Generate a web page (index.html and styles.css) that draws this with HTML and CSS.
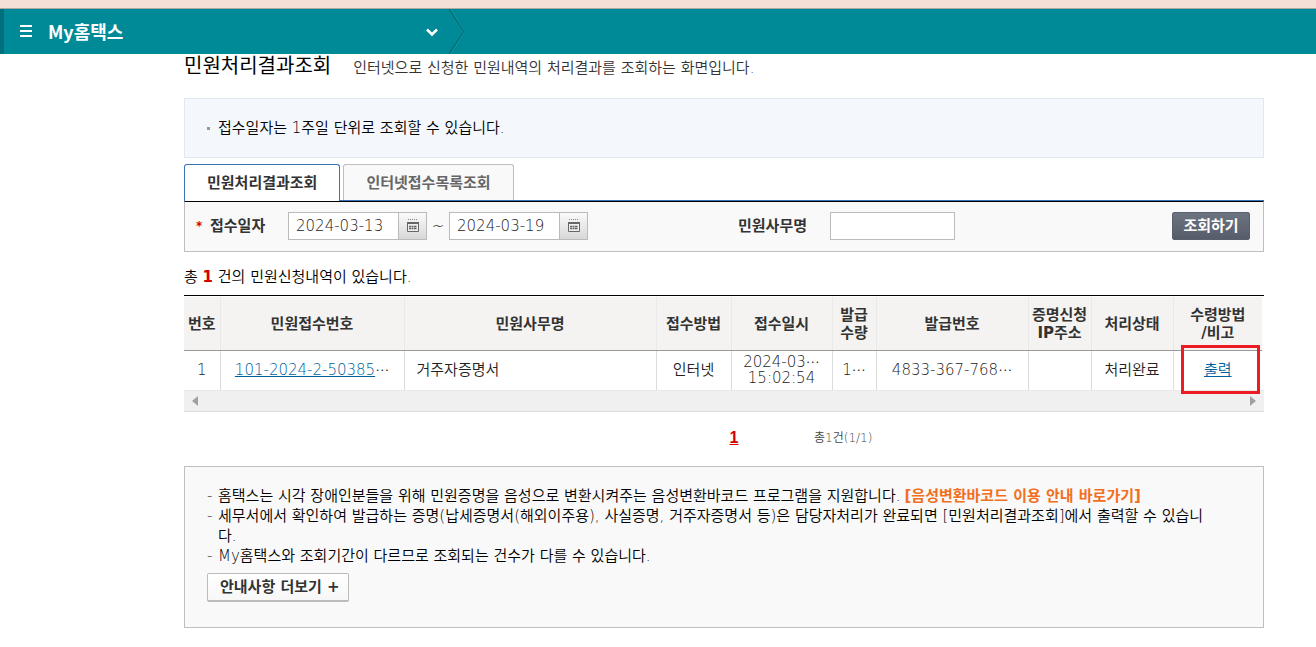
FILE: index.html
```html
<!DOCTYPE html>
<html lang="ko">
<head>
    <meta charset="UTF-8">
    <meta name="viewport" content="width=device-width, initial-scale=1.0">
    <title>민원처리결과조회 - My홈택스</title>
    <link rel="stylesheet" href="styles.css">
</head>
<body>
    <header class="top-bar">
        <button class="menu-button" type="button" aria-label="메뉴">
            <svg width="12" height="12" viewBox="0 0 12 12"><path d="M0 1h12M0 6h12M0 11h12" stroke="#fff" stroke-width="2"/></svg>
        </button>
        <a class="menu-title" href="#">My홈택스</a>
        <button class="menu-toggle" type="button" aria-label="펼치기">
            <svg width="14" height="10" viewBox="0 0 14 10"><path d="M2 2.500l5 5 5-5" fill="none" stroke="#fff" stroke-width="2.600"/></svg>
        </button>
        <svg class="menu-edge" width="16" height="45" viewBox="0 0 16 45"><path d="M0 0l15 22.5L0 45" fill="none" stroke="#00646f" stroke-width="1.2"/><path d="M1.5 0l14 22.5L1.5 45" fill="none" stroke="#2b9da8" stroke-width=".6"/></svg>
    </header>

    <main class="content">
        <div class="page-title">
            <h1>민원처리결과조회</h1>
            <p>인터넷으로 신청한 민원내역의 처리결과를 조회하는 화면입니다.</p>
        </div>

        <ul class="notice">
            <li>접수일자는 1주일 단위로 조회할 수 있습니다.</li>
        </ul>

        <nav class="tabs">
            <button class="tab active" type="button">민원처리결과조회</button>
            <button class="tab" type="button">인터넷접수목록조회</button>
        </nav>

        <form class="search">
            <span class="required">*</span>
            <label class="date-label" for="date-from">접수일자</label>
            <div class="date-field">
                <input type="text" id="date-from" value="2024-03-13">
                <button type="button" aria-label="시작일 선택">
                    <svg width="14" height="14" viewBox="0 0 14 14"><path d="M2 .5h10" stroke="#888" stroke-dasharray="1 1"/><path d="M1.500 3.500h11v9h-11z" fill="#eee" stroke="#666"/><path d="M1 4h12" stroke="#666" stroke-width="2"/><path d="M3 7.500h8M3 9.500h8" stroke="#666" stroke-width="1.500" stroke-dasharray="2 .5"/></svg>
                </button>
            </div>
            <span class="tilde">~</span>
            <div class="date-field">
                <input type="text" id="date-to" value="2024-03-19" aria-label="종료일">
                <button type="button" aria-label="종료일 선택">
                    <svg width="14" height="14" viewBox="0 0 14 14"><path d="M2 .5h10" stroke="#888" stroke-dasharray="1 1"/><path d="M1.500 3.500h11v9h-11z" fill="#eee" stroke="#666"/><path d="M1 4h12" stroke="#666" stroke-width="2"/><path d="M3 7.500h8M3 9.500h8" stroke="#666" stroke-width="1.500" stroke-dasharray="2 .5"/></svg>
                </button>
            </div>
            <label class="name-label" for="work-name">민원사무명</label>
            <input class="name-field" type="text" id="work-name">
            <button class="search-button" type="button">조회하기</button>
        </form>

        <p class="count">총 <strong>1</strong> 건의 민원신청내역이 있습니다.</p>

        <div class="grid">
            <table>
                <colgroup>
                    <col class="col-no">
                    <col class="col-receipt">
                    <col>
                    <col class="col-method">
                    <col class="col-date">
                    <col class="col-qty">
                    <col class="col-issue">
                    <col class="col-ip">
                    <col class="col-status">
                    <col class="col-output">
                </colgroup>
                <thead>
                    <tr>
                        <th>번호</th>
                        <th>민원접수번호</th>
                        <th>민원사무명</th>
                        <th>접수방법</th>
                        <th>접수일시</th>
                        <th>발급<br>수량</th>
                        <th>발급번호</th>
                        <th>증명신청<br>IP주소</th>
                        <th>처리상태</th>
                        <th>수령방법<br>/비고</th>
                    </tr>
                </thead>
                <tbody>
                    <tr>
                        <td>1</td>
                        <td><a href="#">101-2024-2-50385</a><span class="more">⋯</span></td>
                        <td class="left">거주자증명서</td>
                        <td>인터넷</td>
                        <td>2024-03<span class="more">⋯</span><br>15:02:54</td>
                        <td>1<span class="more">⋯</span></td>
                        <td>4833-367-768<span class="more">⋯</span></td>
                        <td></td>
                        <td>처리완료</td>
                        <td class="marked"><a href="#">출력</a></td>
                    </tr>
                </tbody>
            </table>
            <div class="scroll">
                <svg width="6" height="10" viewBox="0 0 6 10"><path d="M6 0v10L0 5z" fill="#a0a0a0"/></svg>
                <svg width="6" height="10" viewBox="0 0 6 10"><path d="M0 0v10l6-5z" fill="#a0a0a0"/></svg>
            </div>
        </div>

        <div class="paging">
            <span></span>
            <a href="#">1</a>
            <span class="total">총1건(1/1)</span>
        </div>

        <section class="guide">
            <ul>
                <li>홈택스는 시각 장애인분들을 위해 민원증명을 음성으로 변환시켜주는 음성변환바코드 프로그램을 지원합니다.<a href="#">[음성변환바코드 이용 안내 바로가기]</a></li>
                <li>세무서에서 확인하여 발급하는 증명(납세증명서(해외이주용), 사실증명, 거주자증명서 등)은 담당자처리가 완료되면 [민원처리결과조회]에서 출력할 수 있습니다.</li>
                <li>My홈택스와 조회기간이 다르므로 조회되는 건수가 다를 수 있습니다.</li>
            </ul>
            <button type="button">안내사항 더보기 +</button>
        </section>
    </main>
</body>
</html>
```
FILE: styles.css
```css
* {
    box-sizing: border-box;
}

body {
    margin: 0;
    background: #fff;
    color: #000;
    font-family: "DejaVu Sans", "Noto Sans CJK KR", sans-serif;
    font-size: 15px;
    font-weight: 350;
    line-height: 20px;
}

h1, p, ul {
    margin: 0;
    padding: 0;
}

ul {
    list-style: none;
}

button, input {
    font: inherit;
    margin: 0;
}

button {
    cursor: pointer;
}

.top-bar {
    display: flex;
    align-items: center;
    height: 54px;
    padding-left: 20px;
    border-top: 8px solid #f5e0d8;
    background: #008a97;
    box-shadow: inset 0 1px #b0a8a4, inset 4px 0 #00707c;
}

.menu-button, .menu-toggle {
    display: flex;
    padding: 0;
    border: 0;
    background: none;
}

.menu-toggle {
    padding-top: 2px;
}

.menu-title {
    width: 377px;
    margin-left: 16px;
    color: #fff;
    font-family: "Noto Sans CJK KR", sans-serif;
    font-size: 18px;
    font-weight: 700;
    text-decoration: none;
}

.menu-edge {
    margin-left: 10px;
}

.content {
    padding: 0 52px 19px 184px;
}

.page-title {
    display: flex;
    align-items: center;
    gap: 22px;
    height: 44px;
    padding-bottom: 20px;
}

.page-title h1 {
    font-size: 20px;
    font-weight: 400;
}

.page-title p {
    padding-top: 4px;
    color: #333;
}

.notice {
    padding: 19px 22px;
    border: 1px solid #dfe7f2;
    background: #f4f8fd;
}

.notice li {
    display: flex;
    align-items: center;
    gap: 8px;
}

.notice li::before {
    content: "";
    width: 3px;
    height: 3px;
    background: #999;
}

.tabs {
    display: flex;
    gap: 3px;
    margin-top: 6px;
    border-bottom: 1px solid #3b73b9;
}

.tab {
    height: 36px;
    padding: 0 22px;
    border: 1px solid #bfbfbf;
    border-bottom: 0;
    border-radius: 3px 3px 0 0;
    background: #f9f9f9;
    color: #666;
    font-weight: 700;
}

.tab.active {
    height: 37px;
    margin-bottom: -1px;
    border-color: #3b73b9;
    background: #fff;
    color: #333;
}

.search {
    display: flex;
    align-items: center;
    height: 51px;
    padding: 0 13px 2px 11px;
    border: 1px solid #bfbfbf;
    border-top-color: #000;
    background: #f9f9f9;
}

.search label {
    color: #333;
    font-weight: 700;
}

.search input {
    height: 28px;
    border: 1px solid #bbb;
    background: #fff;
    color: #222;
}

.required {
    width: 14px;
    color: #d50000;
    font-size: 12px;
    font-weight: 700;
}

.date-label {
    width: 78px;
}

.date-field {
    display: flex;
}

.date-field input {
    width: 111px;
    padding: 0 7px;
}

.date-field button {
    display: flex;
    align-items: center;
    justify-content: center;
    width: 28px;
    height: 28px;
    padding: 0;
    border: 1px solid #bbb;
    border-left: 0;
    background: linear-gradient(#fafafa, #d8d8d8);
}

.tilde {
    width: 22px;
    text-align: center;
}

.name-label {
    margin-left: 150px;
}

.name-field {
    width: 125px;
    margin-left: 23px;
}

.search-button {
    width: 78px;
    height: 28px;
    margin-left: auto;
    padding: 0;
    border: 1px solid #596170;
    border-radius: 2px;
    background: linear-gradient(#6b7480, #575c69);
    color: #fff;
    font-weight: 700;
}

.count {
    padding: 15px 0 8px;
}

.count strong {
    color: #d50000;
    font-weight: 700;
}

.grid {
    border-top: 1px solid #000;
    padding-top: 1px;
}

table {
    width: calc(100% - 2px);
    border-collapse: collapse;
    table-layout: fixed;
}

.col-no { width: 36px; }
.col-receipt { width: 184px; }
.col-method { width: 75px; }
.col-date { width: 101px; }
.col-qty { width: 44px; }
.col-issue { width: 152px; }
.col-ip { width: 63px; }
.col-status { width: 82px; }
.col-output { width: 89px; }

th, td {
    padding: 0;
    text-align: center;
    color: #333;
}

th {
    height: 53px;
    padding-top: 2px;
    border-right: 1px solid #e9e9e9;
    border-bottom: 1px solid #999;
    background: #f5f3f2;
    font-weight: 700;
    line-height: 18px;
}

td {
    height: 40px;
    border-right: 1px solid #ddd;
    color: #222;
    line-height: 16px;
    white-space: nowrap;
}

th:last-child, td:last-child {
    border-right: 0;
}

td.left {
    padding-left: 12px;
    text-align: left;
}

td a {
    color: #005f9e;
}

.more {
    font-family: "Noto Sans CJK KR", sans-serif;
    font-size: 14px;
    font-weight: 300;
    line-height: 1;
}

.marked {
    position: relative;
}

.marked::after {
    content: "";
    position: absolute;
    inset: -6px 2px -4px 7px;
    border: 3px solid #ed1c24;
    pointer-events: none;
}

.scroll {
    display: flex;
    align-items: center;
    justify-content: space-between;
    height: 22px;
    padding: 0 8px;
    border-top: 1px solid #e9e9e9;
    border-bottom: 1px solid #ddd;
    background: #f0f0f0;
}

.paging {
    display: grid;
    grid-template-columns: 1fr 12px 1fr;
    align-items: center;
    margin: 16px 0 18px 20px;
}

.paging a {
    color: #d50000;
    text-align: center;
    font-family: "Liberation Sans", sans-serif;
    font-size: 16px;
    font-weight: 700;
}

.total {
    padding-left: 74px;
    color: #444;
    font-size: 12px;
}

.guide {
    min-height: 162px;
    padding: 19px 54px 25px 22px;
    border: 1px solid #bfbfbf;
    background: #f9f9f9;
}

.guide li {
    position: relative;
    padding-left: 11px;
}

.guide li::before {
    content: "-";
    position: absolute;
    left: 0;
    color: #333;
}

.guide a {
    margin-left: 4px;
    color: #f26f21;
    font-weight: 700;
    text-decoration: none;
}

.guide button {
    height: 29px;
    margin-top: 7px;
    padding: 0 8px 0 12px;
    border: 1px solid #bbb;
    border-bottom-width: 2px;
    border-radius: 2px;
    background: linear-gradient(#fff, #f7f7f7);
    color: #333;
    font-weight: 700;
}
```
